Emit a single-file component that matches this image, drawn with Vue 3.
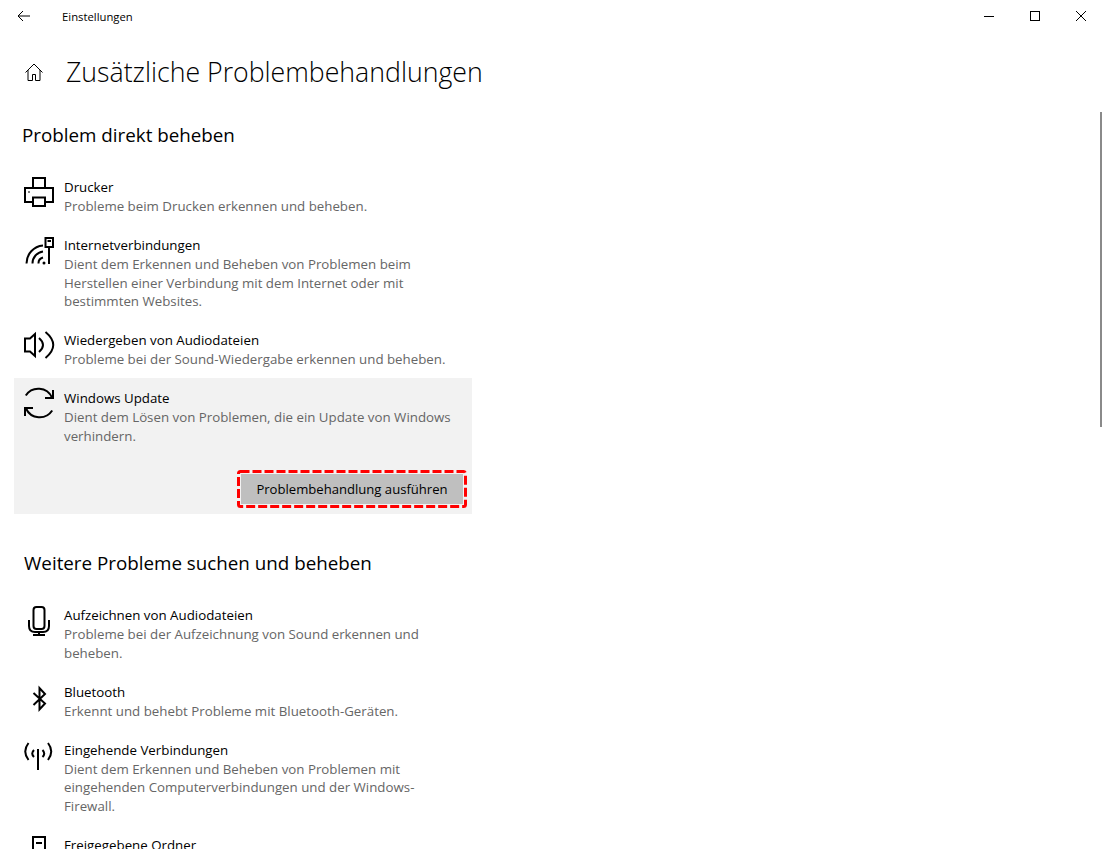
<script setup>
// Settings page: additional troubleshooters. Rows come from the two lists below.
const direct = [
  { id: 'printer', title: 'Drucker', desc: 'Probleme beim Drucken erkennen und beheben.' },
  { id: 'internet', title: 'Internetverbindungen', desc: 'Dient dem Erkennen und Beheben von Problemen beim\nHerstellen einer Verbindung mit dem Internet oder mit\nbestimmten Websites.' },
  { id: 'audio', title: 'Wiedergeben von Audiodateien', desc: 'Probleme bei der Sound-Wiedergabe erkennen und beheben.' },
  { id: 'update', title: 'Windows Update', desc: 'Dient dem Lösen von Problemen, die ein Update von Windows\nverhindern.', selected: true },
]
const more = [
  { id: 'mic', title: 'Aufzeichnen von Audiodateien', desc: 'Probleme bei der Aufzeichnung von Sound erkennen und\nbeheben.' },
  { id: 'bluetooth', title: 'Bluetooth', desc: 'Erkennt und behebt Probleme mit Bluetooth-Geräten.' },
  { id: 'antenna', title: 'Eingehende Verbindungen', desc: 'Dient dem Erkennen und Beheben von Problemen mit\neingehenden Computerverbindungen und der Windows-\nFirewall.' },
  { id: 'share', title: 'Freigegebene Ordner', desc: 'Probleme beim Zugriff auf Dateien und Ordner beheben.' },
]
const sections = [
  { title: 'Problem direkt beheben', items: direct },
  { title: 'Weitere Probleme suchen und beheben', items: more },
]
</script>

<template>
  <div class="window">
    <header class="titlebar">
      <button class="back" aria-label="Zurück">
        <svg width="14" height="12" viewBox="0 0 14 12"><path d="M13 6H1M6 1 1 6l5 5" /></svg>
      </button>
      <span class="app-name">Einstellungen</span>
      <div class="controls">
        <span class="ctl"><svg width="12" height="12" viewBox="0 0 12 12"><path d="M1 6.5h10" /></svg></span>
        <span class="ctl"><svg width="12" height="12" viewBox="0 0 12 12"><rect x="1.5" y="1.5" width="9" height="9" /></svg></span>
        <span class="ctl"><svg width="12" height="12" viewBox="0 0 12 12"><path d="M1 1l10 10M11 1 1 11" /></svg></span>
      </div>
    </header>

    <div class="page-head">
      <svg class="home" width="20" height="20" viewBox="0.5 0 20 20">
        <path d="M2 10.500 10.500 2l8.500 8.500M4.500 8v10.500h4.500v-6h3v6h4.500V8" />
      </svg>
      <h1>Zusätzliche Problembehandlungen</h1>
    </div>

    <section v-for="(s, i) in sections" :key="s.title" :class="['group', 'group-' + i]">
      <h2>{{ s.title }}</h2>
      <div
        v-for="item in s.items"
        :key="item.id"
        class="item"
        :class="{ selected: item.selected }"
      >
        <svg class="icon" width="40" height="32" viewBox="0 0 40 32">
          <g v-if="item.id === 'printer'" stroke-width="2">
            <path d="M9 11V1h12v10M9 25H1V11h28v14h-8" />
            <rect x="9" y="20.5" width="12" height="8.5" />
            <path d="M4 15h2" stroke-width="1" />
          </g>
          <g v-else-if="item.id === 'internet'" stroke-width="2">
            <path d="M2.500 28.500A18 18 0 0 1 19 10.500M8.500 28.500A12 12 0 0 1 19 16.500M14.500 28.500A6 6 0 0 1 19 22.500" />
            <circle cx="20" cy="28" r="1.500" class="fill" />
            <path d="M25 12V29" />
            <rect x="21.500" y="3" width="7.500" height="9" />
            <path d="M23.500 6h3.500" />
          </g>
          <g v-else-if="item.id === 'audio'" stroke-width="2">
            <path d="M1 8.500h5L11 4v22l-5-4.500H1z" />
            <path d="M15 8q8 7 0 14M21.500 2q15.500 13 0 26" />
          </g>
          <g v-else-if="item.id === 'update'" stroke-width="2">
            <path d="M1.800 7.500A15 15 0 0 1 28 9.500M29 2v8h-8" />
            <path d="M28.200 22.500A15 15 0 0 1 2 20.500M1 28v-8h8" />
          </g>
          <g v-else-if="item.id === 'mic'" stroke-width="2">
            <rect x="9.500" y="2" width="11" height="22" rx="3" />
            <path d="M5 15v6q0 6 6 6h8q6 0 6-6v-6M15 27v3M9 30h12" />
          </g>
          <g v-else-if="item.id === 'bluetooth'" stroke-width="2">
            <path d="M9.500 11 21 21.500l-5.500 6V6l5.500 6L9.500 23" />
          </g>
          <g v-else-if="item.id === 'antenna'" stroke-width="2">
            <path d="M14 9v21M4.500 3Q-2 11.500 4.500 20M10 10q-3.500 3.500 0 7M24 3q6.500 8.500 0 17M18.500 10q3.500 3.500 0 7" />
          </g>
          <g v-else-if="item.id === 'share'" stroke-width="2">
            <rect x="9" y="2" width="12" height="26" />
            <path d="M12 8h6M12 15h6" />
          </g>
        </svg>
        <div class="text">
          <div class="title">{{ item.title }}</div>
          <div class="desc">{{ item.desc }}</div>
          <div v-if="item.selected" class="actions">
            <button class="run">
              Problembehandlung ausführen
              <svg class="dash" width="230" height="38" viewBox="0 0 230 38">
                <rect x="1.500" y="1.500" width="227" height="35" rx="2" />
              </svg>
            </button>
          </div>
        </div>
      </div>
    </section>

    <div class="scrollbar"></div>
  </div>
</template>

<style scoped>
.window {
  position: relative;
  width: 1104px;
  height: 849px;
  overflow: hidden;
  background: #fff;
  color: #000;
  font-family: "Open Sans", "Liberation Sans", sans-serif;
  font-size: 13.3px;
}
svg {
  fill: none;
  stroke: #000;
}
.fill {
  fill: #000;
  stroke: none;
}
.titlebar {
  display: flex;
  align-items: center;
  height: 32px;
}
.back {
  width: 48px;
  height: 32px;
  padding: 0;
  border: none;
  background: none;
  display: flex;
  align-items: center;
  justify-content: center;
}
.app-name {
  margin-left: 14px;
  font-size: 11.3px;
}
.controls {
  display: flex;
  margin-left: auto;
}
.ctl {
  width: 46px;
  height: 32px;
  display: flex;
  align-items: center;
  justify-content: center;
}
.page-head {
  display: flex;
  align-items: center;
  height: 38px;
  margin-top: 20px;
  padding-left: 24px;
}
.home {
  margin: 2px 22px 0 0;
}
h1 {
  margin: 0;
  font-size: 26.7px;
  font-weight: 300;
}
h2 {
  margin: 0 0 18px;
  font-size: 18.8px;
  font-weight: 400;
  line-height: 28px;
}
.group {
  padding-left: 24px;
}
.group-0 {
  margin-top: 31px;
}
.group-0 h2 {
  margin-left: -2px;
}
.group-1 {
  margin-top: 35px;
}
.item {
  display: flex;
  width: 458px;
  margin-left: -10px;
  padding: 11px 10px 9px;
  box-sizing: border-box;
}
.item.selected {
  background: #f2f2f2;
  height: 136px;
}
.icon {
  flex: none;
  overflow: visible;
  margin-top: -1px;
}
.title {
  line-height: 19px;
}
.desc {
  color: #666;
  line-height: 18.5px;
  padding-bottom: 0.5px;
  white-space: pre-line;
}
.text {
  flex: 1;
  min-width: 0;
}
.actions {
  display: flex;
  justify-content: flex-end;
  margin: 28.5px -1px 0 0;
}
.run {
  position: relative;
  width: 222px;
  height: 30px;
  padding: 0;
  border: none;
  background: #bfbfbf;
  color: #000;
  font: inherit;
  font-size: 13.1px;
}
.dash {
  position: absolute;
  left: -4px;
  top: -4px;
}
.dash rect {
  stroke: #f00;
  stroke-width: 3;
  stroke-dasharray: 9 3;
}
.scrollbar {
  position: absolute;
  top: 112px;
  right: 2px;
  width: 2px;
  height: 315px;
  background: #8a8a8a;
}
</style>

<style>
html, body {
  margin: 0;
  overflow: hidden;
}
</style>
